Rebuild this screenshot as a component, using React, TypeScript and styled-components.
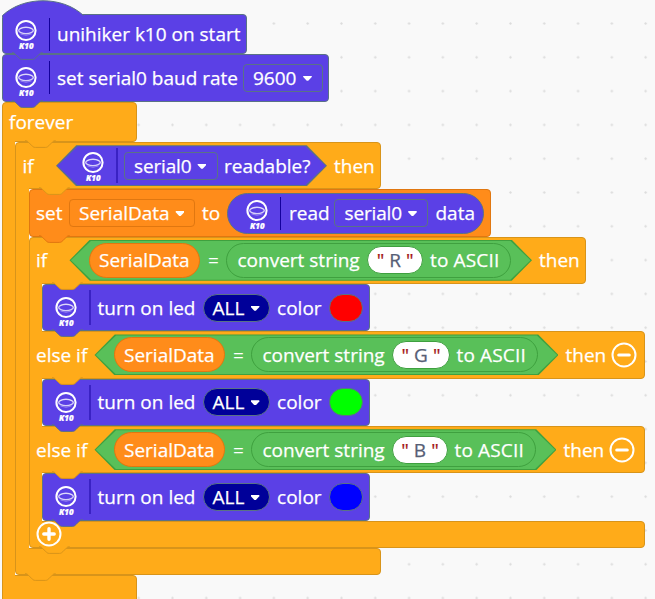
import React, { ReactNode } from "react";
import styled, { createGlobalStyle } from "styled-components";

const Global = createGlobalStyle`
  html, body { margin: 0; padding: 0; overflow: hidden; background: #f9f9f9; }
  *, *::before, *::after { box-sizing: border-box; }
`;

interface Tone { fill: string; line: string; }
const K10: Tone = { fill: "#5b40e6", line: "#5a7286" };
const CONTROL: Tone = { fill: "#ffab19", line: "#d8941a" };
const DATA: Tone = { fill: "#ff8c1a", line: "#e07710" };
const OPS: Tone = { fill: "#59c059", line: "#3fa03f" };

const Workspace = styled.main`
  width: 655px;
  height: 599px;
  overflow: hidden;
  padding: 14px 0 0 1.6px;
  font-family: "Open Sans", "Noto Sans", sans-serif;
  font-size: 19px;
  font-weight: 500;
  -webkit-text-stroke: 0.25px currentColor;
  color: #fff;
  background-color: #f9f9f9;
  background-image: radial-gradient(circle at 1.5px 1.5px, #dcdcdc 0.8px, transparent 1.5px);
  background-size: 33.8px 33.8px;
  background-position: 2px 22px;
`;

const Stack = styled.div`
  display: flex;
  flex-direction: column;
  align-items: flex-start;
`;

const Bar = styled.div<{ $tone: Tone; $w: number; $h?: number; $pad?: number }>`
  position: relative;
  display: flex;
  align-items: center;
  width: ${(p) => p.$w}px;
  height: ${(p) => p.$h ?? 47.33}px;
  padding-left: ${(p) => p.$pad ?? 6.4}px;
  background: ${(p) => p.$tone.fill};
  border: 1px solid ${(p) => p.$tone.line};
  border-radius: 4px;
`;

const Segment = styled(Bar)<{ $open: "below" | "both" | "above" }>`
  ${(p) => (p.$open !== "above" ? "border-bottom-left-radius: 0;" : "")}
  ${(p) => (p.$open !== "below" ? "border-top-left-radius: 0;" : "")}
`;

const Mouth = styled.div`
  display: flex;
  align-items: stretch;
`;

const Arm = styled.div`
  position: relative;
  width: 13.5px;
  margin: -2px 0;
  background: ${CONTROL.fill};
  border-left: 1px solid ${CONTROL.line};
  z-index: 1;
`;

const TabSvg = styled.svg<{ $x: number }>`
  position: absolute;
  left: ${(p) => p.$x}px;
  bottom: -8px;
  z-index: 3;
  overflow: visible;
`;

const HatSvg = styled.svg`
  position: absolute;
  left: -1px;
  top: -15px;
`;

const Label = styled.span<{ $w: number; $ml?: number; $ls?: number }>`
  flex: none;
  width: ${(p) => p.$w}px;
  margin-left: ${(p) => p.$ml ?? 0}px;
  letter-spacing: ${(p) => p.$ls ?? 0}px;
  white-space: nowrap;
  line-height: 26px;
`;

const Equals = styled(Label)`
  font-weight: 400;
  -webkit-text-stroke: 0;
`;

const Divider = styled.i<{ $dim?: boolean }>`
  flex: none;
  width: ${(p) => (p.$dim ? 2 : 1)}px;
  height: ${(p) => (p.$dim ? 35 : 33)}px;
  margin-left: 12px;
  background: ${(p) => (p.$dim ? "#3a22c4" : "#14009c")};
`;

const LogoSvg = styled.svg<{ $drop: number }>`
  flex: none;
  position: relative;
  top: ${(p) => p.$drop}px;
  overflow: visible;
  -webkit-text-stroke: 0;
`;

const Select = styled.span<{ $w: number; $ml: number; $line: string }>`
  flex: none;
  display: flex;
  align-items: center;
  width: ${(p) => p.$w}px;
  height: 28px;
  margin-left: ${(p) => p.$ml}px;
  padding-left: 9px;
  border: 1px solid ${(p) => p.$line};
  border-radius: 4px;
`;

const Pill = styled.span<{ $tone: Tone; $w: number; $h: number; $ml: number; $pad?: number }>`
  flex: none;
  display: flex;
  align-items: center;
  width: ${(p) => p.$w}px;
  height: ${(p) => p.$h}px;
  margin-left: ${(p) => p.$ml}px;
  padding-left: ${(p) => p.$pad ?? 9}px;
  background: ${(p) => p.$tone.fill};
  border: 1px solid ${(p) => p.$tone.line};
  border-radius: 21px;
`;

const Hexagon = styled.span<{ $tone: Tone; $w: number; $ml: number; $pad: number }>`
  --edge: polygon(20.25px 0, calc(100% - 20.25px) 0, 100% 50%, calc(100% - 20.25px) 100%, 20.25px 100%, 0 50%);
  position: relative;
  flex: none;
  display: flex;
  align-items: center;
  width: ${(p) => p.$w}px;
  height: 41px;
  margin-left: ${(p) => p.$ml}px;
  padding-left: ${(p) => p.$pad}px;
  background: ${(p) => p.$tone.line};
  clip-path: var(--edge);
  &::before {
    content: "";
    position: absolute;
    inset: 1px 1.4px;
    background: ${(p) => p.$tone.fill};
    clip-path: var(--edge);
  }
  & > * { position: relative; }
`;

const TextField = styled.span<{ $w: number }>`
  flex: none;
  display: flex;
  align-items: center;
  justify-content: center;
  gap: 5px;
  width: ${(p) => p.$w}px;
  height: 28px;
  margin-left: 7px;
  background: #fff;
  border: 1px solid #3fa03f;
  border-radius: 14px;
  color: #575e75;
`;

const Quote = styled.span`
  color: #a31515;
`;

const CircleSvg = styled.svg<{ $ml?: number }>`
  flex: none;
  position: relative;
  z-index: 4;
  margin-left: ${(p) => p.$ml ?? 0}px;
`;

const Tab = ({ tone, x = -1 }: { tone: Tone; x?: number }) => (
  <TabSvg $x={x} width="44" height="9">
    <path
      d="M10.1 0V.8c1.7 0 2.5.8 3.4 1.7l3.4 3.3c.8.9 1.7 1.7 3.4 1.7h10.1c1.7 0 2.5-.8 3.4-1.7l3.4-3.3c.8-.9 1.7-1.7 3.4-1.7V0z"
      fill={tone.fill}
    />
    <path
      d="M10.1.6c1.7 0 2.5.8 3.4 1.7l3.4 3.4c.8.9 1.7 1.7 3.4 1.7h10.1c1.7 0 2.5-.8 3.4-1.7l3.4-3.4c.8-.9 1.7-1.7 3.4-1.7"
      fill="none"
      stroke={tone.line}
    />
  </TabSvg>
);

const Logo = ({ drop }: { drop: number }) => (
  <LogoSvg $drop={drop} width="22" height="30" viewBox="0 0 22 30" fill="none" stroke="#fff">
    <circle cx="11" cy="10.5" r="9.6" strokeWidth="2" />
    <ellipse cx="11" cy="10.5" rx="7.3" ry="3.1" strokeWidth="1.4" strokeOpacity=".75" />
    <path d="M4.5 8.8Q11 5 17.5 8.8M5.5 14q5.5 2.5 11 0" strokeWidth="1" strokeOpacity=".35" />
    <text x="4" y="29" fill="#fff" stroke="#fff" strokeWidth=".2" fontFamily="Open Sans" fontSize="7.8" fontWeight="800" fontStyle="italic" textLength="14.5" lengthAdjust="spacingAndGlyphs">K10</text>
  </LogoSvg>
);

const Caret = styled.i<{ $ml: number }>`
  flex: none;
  width: 9px;
  height: 5px;
  margin: 1px 0 0 ${(p) => p.$ml}px;
  background: #fff;
  clip-path: polygon(6% 0, 94% 0, 100% 20%, 58% 100%, 42% 100%, 0 20%);
`;

const SerialSelect = ({ ml }: { ml: number }) => (
  <Select $w={94} $ml={ml} $line={K10.line}>
    <Label $w={58} $ls={-0.15}>serial0</Label>
    <Caret $ml={5.5} />
  </Select>
);

const Minus = () => (
  <CircleSvg $ml={5} width="26" height="26" fill="none" stroke="#fff">
    <circle cx="13" cy="13" r="11.5" strokeWidth="2" />
    <path d="M7.8 13h10.4" strokeWidth="3.2" strokeLinecap="round" />
  </CircleSvg>
);

const PlusSlot = styled.div`
  position: absolute;
  left: 6px;
  top: -1px;
  z-index: 5;
  line-height: 0;
`;

const Plus = () => (
  <PlusSlot>
    <CircleSvg width="26" height="26" fill="none" stroke="#fff">
      <circle cx="13" cy="13" r="11.5" strokeWidth="2" />
      <path d="M7.8 13h10.4M13 7.8v10.4" strokeWidth="3.4" strokeLinecap="round" />
    </CircleSvg>
  </PlusSlot>
);

const Compare = ({ letter, ml, w, field }: { letter: string; ml: number; w: number; field: number }) => (
  <Hexagon $tone={OPS} $w={w} $ml={ml} $pad={19.5}>
    <Pill $tone={DATA} $w={111} $h={35} $ml={0}>
      <Label $w={91}>SerialData</Label>
    </Pill>
    <Equals $w={11} $ml={8}>=</Equals>
    <Pill $tone={OPS} $w={w - 177.5} $h={35} $ml={7.5} $pad={10}>
      <Label $w={122.5}>convert string</Label>
      <TextField $w={field}>
        <Quote>"</Quote>{letter}<Quote>"</Quote>
      </TextField>
      <Label $w={72} $ml={6.5} $ls={0.15}>to ASCII</Label>
    </Pill>
  </Hexagon>
);

const LedBlock = ({ color }: { color: string }) => (
  <Bar $tone={K10} $w={327.5} $pad={12}>
    <Logo drop={4.5} />
    <Divider $dim />
    <Label $w={98} $ml={6.5}>turn on led</Label>
    <Pill $tone={{ fill: "#000099", line: K10.line }} $w={67.5} $h={28} $ml={7}>
      <Label $w={32}>ALL</Label>
      <Caret $ml={6} />
    </Pill>
    <Label $w={45} $ml={7}>color</Label>
    <Pill $tone={{ fill: color, line: K10.line }} $w={34} $h={28} $ml={6.5} />
    <Tab tone={K10} />
  </Bar>
);

const Body = ({ children }: { children: ReactNode }) => (
  <Mouth>
    <Arm />
    <Stack>{children}</Stack>
  </Mouth>
);

export default function App() {
  return (
    <>
      <Global />
      <Workspace>
        <Stack>
          <Bar $tone={K10} $w={245.5} $h={40.2} $pad={12.4}>
            <HatSvg width="84" height="17">
              <path d="M.5 15.5C21.6-4.2 60.4-4.2 81.5 15.5V17H.5z" fill={K10.fill} />
              <path d="M.5 17V15.5C21.6-4.2 60.4-4.2 81.5 15.5" fill="none" stroke={K10.line} />
            </HatSvg>
            <Logo drop={0.8} />
            <Divider />
            <Label $w={184} $ml={7}>unihiker k10 on start</Label>
            <Tab tone={K10} />
          </Bar>
          <Bar $tone={K10} $w={327.5} $pad={12.4}>
            <Logo drop={4.5} />
            <Divider />
            <Label $w={181} $ml={7}>set serial0 baud rate</Label>
            <Select $w={80} $ml={5} $line={K10.line}>
              <Label $w={45}>9600</Label>
              <Caret $ml={5} />
            </Select>
            <Tab tone={K10} />
          </Bar>

          <Segment $tone={CONTROL} $w={135.5} $h={40.5} $open="below">
            <Label $w={64}>forever</Label>
            <Tab tone={CONTROL} x={12.5} />
          </Segment>
          <Body>
            <Segment $tone={CONTROL} $w={366} $open="below">
              <Label $w={12}>if</Label>
              <Hexagon $tone={K10} $w={271} $ml={21.5} $pad={26}>
                <Logo drop={1.5} />
                <Divider $dim />
                <SerialSelect ml={6} />
                <Label $w={86} $ml={6}>readable?</Label>
              </Hexagon>
              <Label $w={41} $ml={7}>then</Label>
              <Tab tone={CONTROL} x={12.5} />
            </Segment>
            <Body>
              <Bar $tone={DATA} $w={462.5}>
                <Label $w={26}>set</Label>
                <Select $w={126} $ml={7} $line={DATA.line}>
                  <Label $w={91}>SerialData</Label>
                  <Caret $ml={5.5} />
                </Select>
                <Label $w={19} $ml={7}>to</Label>
                <Pill $tone={K10} $w={257.5} $h={41} $ml={6} $pad={18.5}>
                  <Logo drop={1.5} />
                  <Divider />
                  <Label $w={40} $ml={7.5}>read</Label>
                  <SerialSelect ml={5.5} />
                  <Label $w={40} $ml={7}>data</Label>
                </Pill>
                <Tab tone={DATA} />
              </Bar>

              <Segment $tone={CONTROL} $w={557.5} $open="below">
                <Label $w={12}>if</Label>
                <Compare letter="R" ml={21.5} w={462.5} field={56.5} />
                <Label $w={41} $ml={7}>then</Label>
                <Tab tone={CONTROL} x={12.5} />
              </Segment>
              <Body><LedBlock color="#ff0000" /></Body>
              <Segment $tone={CONTROL} $w={616} $open="both">
                <Label $w={52}>else if</Label>
                <Compare letter="G" ml={6.5} w={464} field={58} />
                <Label $w={41} $ml={7}>then</Label>
                <Minus />
                <Tab tone={CONTROL} x={12.5} />
              </Segment>
              <Body><LedBlock color="#00ff00" /></Body>
              <Segment $tone={CONTROL} $w={616} $open="both">
                <Label $w={52}>else if</Label>
                <Compare letter="B" ml={6.5} w={462} field={56} />
                <Label $w={41} $ml={7}>then</Label>
                <Minus />
                <Tab tone={CONTROL} x={12.5} />
              </Segment>
              <Body><LedBlock color="#0000ff" /></Body>
              <Segment $tone={CONTROL} $w={616} $h={27} $open="above">
                <Plus />
                <Tab tone={CONTROL} />
              </Segment>
            </Body>
            <Segment $tone={CONTROL} $w={366} $h={27} $open="above">
              <Tab tone={CONTROL} />
            </Segment>
          </Body>
          <Segment $tone={CONTROL} $w={135.5} $h={40} $open="above" />
        </Stack>
      </Workspace>
    </>
  );
}
